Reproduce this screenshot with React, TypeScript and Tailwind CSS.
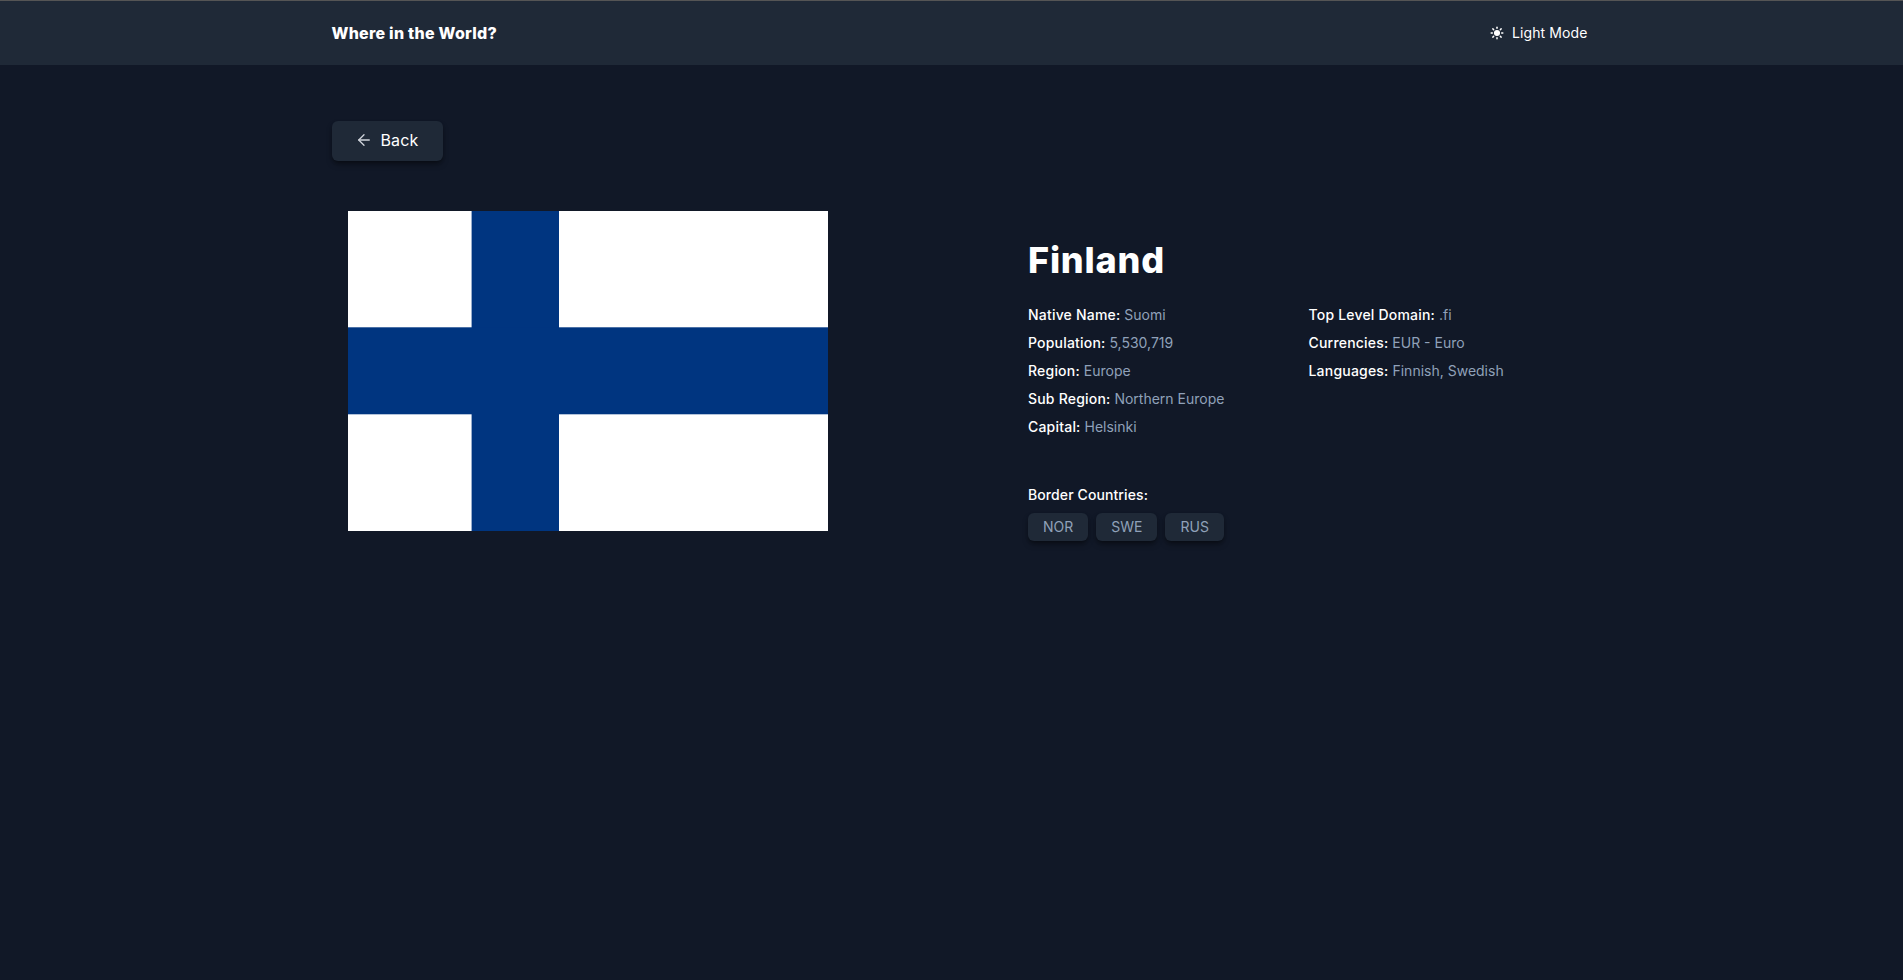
import { ArrowLeft, Sun } from 'lucide-react';

const leftFacts = [
  ['Native Name:', 'Suomi'],
  ['Population:', '5,530,719'],
  ['Region:', 'Europe'],
  ['Sub Region:', 'Northern Europe'],
  ['Capital:', 'Helsinki'],
];

const rightFacts = [
  ['Top Level Domain:', '.fi'],
  ['Currencies:', 'EUR - Euro'],
  ['Languages:', 'Finnish, Swedish'],
];

const borders = ['NOR', 'SWE', 'RUS'];

function Facts({ items }: { items: string[][] }) {
  return (
    <div className="flex flex-col gap-2">
      {items.map(([label, value]) => (
        <p key={label} className="text-sm leading-5 font-medium tracking-[0.2px] text-white">
          {label} <span className="font-normal tracking-normal text-slate-400">{value}</span>
        </p>
      ))}
    </div>
  );
}

function FinlandFlag() {
  return (
    <svg width="480" height="320" viewBox="0 0 480 320" className="block">
      <rect width="480" height="320" fill="#ffffff" />
      <rect x="123.6" width="87.4" height="320" fill="#003580" />
      <rect y="116.3" width="480" height="87" fill="#003580" />
    </svg>
  );
}

export default function App() {
  return (
    <div className="min-h-screen bg-[#111827] font-['Inter',sans-serif] text-white">
      <header className="h-[65px] border-t border-[#555555] bg-[#1f2937]">
        <div className="mx-auto flex h-full max-w-7xl items-center justify-between pr-1 pl-5">
          <h1 className="text-base font-extrabold tracking-[0.25px]">Where in the World?</h1>
          <button className="flex items-center gap-2 text-sm tracking-[0.1px]">
            <Sun size={14} strokeWidth={2.5} fill="currentColor" />
            Light Mode
          </button>
        </div>
      </header>

      <main className="mx-auto max-w-7xl px-5">
        <button className="mt-14 flex h-10 w-[111px] items-center justify-center gap-[7px] rounded-md bg-[#1f2937] pb-0.5 text-base tracking-[0.2px] shadow-md shadow-black/40">
          <ArrowLeft size={18} strokeWidth={1.75} className="text-gray-300" />
          Back
        </button>

        <div className="mt-[50px] flex">
          <div className="w-[696.5px] pl-4">
            <FinlandFlag />
          </div>

          <div className="pt-[29px]">
            <h2 className="text-4xl leading-10 font-extrabold tracking-[0.8px]">Finland</h2>
            <div className="mt-[25px] flex">
              <div className="w-[280.5px]">
                <Facts items={leftFacts} />
              </div>
              <Facts items={rightFacts} />
            </div>
            <p className="mt-12 text-sm leading-5 font-medium tracking-[0.1px]">Border Countries:</p>
            <div className="mt-2 flex gap-2">
              {borders.map((code) => (
                <span
                  key={code}
                  className="flex h-7 items-center rounded-md bg-[#1f2937] px-[15px] text-sm text-slate-400 shadow-md shadow-black/40"
                >
                  {code}
                </span>
              ))}
            </div>
          </div>
        </div>
      </main>
    </div>
  );
}
